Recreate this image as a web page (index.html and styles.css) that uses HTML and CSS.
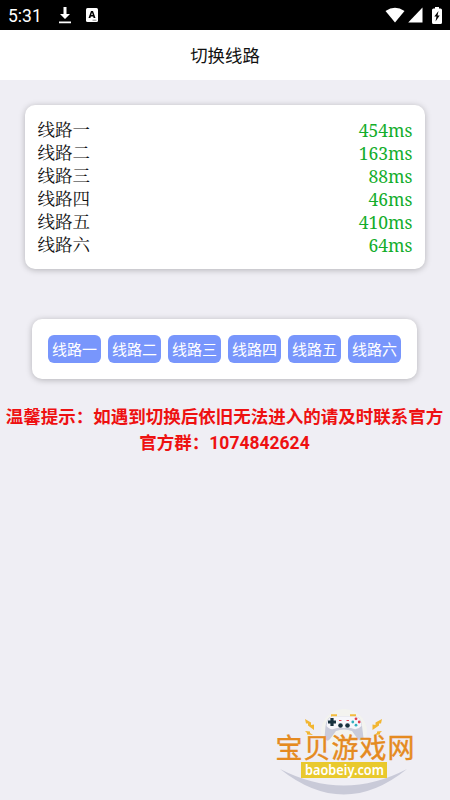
FILE: index.html
```html
<!DOCTYPE html>
<html lang="zh-CN">
<head>
    <meta charset="UTF-8">
    <meta name="viewport" content="width=device-width, initial-scale=1.0">
    <title>切换线路</title>
    <link rel="stylesheet" href="styles.css">
</head>
<body>
    <!-- Status Bar -->
    <div class="status-bar">
        <span class="time">5:31</span>
        <svg class="icon-download" width="14" height="17" viewBox="0 0 14 17">
            <path d="M5.5 0h3v7H12L7 12 2 7h3.5zM1 14.5h12v1.7H1z" fill="#fff"/>
        </svg>
        <svg class="icon-app" width="12" height="14" viewBox="0 0 12 14">
            <rect width="12" height="14" rx="1.5" fill="#fff"/>
            <path d="M2.5 10 5 3h2l2.5 7H7.6L7.2 8.5H4.8L4.4 10zM5.2 7h1.6L6 4.5z" fill="#000" fill-rule="evenodd"/>
            <path d="M6.5 12.2h4" stroke="#888" stroke-width="1"/>
        </svg>
        <div class="status-right">
            <svg width="20" height="16" viewBox="0 0 20 16">
                <path d="M.5 4Q10-2.500 19.500 4L10 15.500z" fill="#fff"/>
            </svg>
            <svg width="15" height="16" viewBox="0 0 15 16">
                <path d="M14.500.5v15H.2z" fill="#fff"/>
            </svg>
            <svg class="battery" width="10" height="17" viewBox="0 0 10 17">
                <path d="M3 0h4v1.5h1.500Q10 1.500 10 3v12.500Q10 17 8.500 17h-7Q0 17 0 15.500V3Q0 1.500 1.500 1.500H3z" fill="#fff"/>
                <path d="M6.500 4 2.300 9.500H4.500L3.500 14.500 7.700 8.500H5.500z" fill="#000"/>
            </svg>
        </div>
    </div>

    <div class="header">切换线路</div>

    <!-- Line Speeds -->
    <div class="card line-list">
        <div class="line"><span>线路一</span><span class="ms">454ms</span></div>
        <div class="line"><span>线路二</span><span class="ms">163ms</span></div>
        <div class="line"><span>线路三</span><span class="ms">88ms</span></div>
        <div class="line"><span>线路四</span><span class="ms">46ms</span></div>
        <div class="line"><span>线路五</span><span class="ms">410ms</span></div>
        <div class="line"><span>线路六</span><span class="ms">64ms</span></div>
    </div>

    <!-- Line Buttons -->
    <div class="card line-buttons">
        <button>线路一</button>
        <button>线路二</button>
        <button>线路三</button>
        <button>线路四</button>
        <button>线路五</button>
        <button>线路六</button>
    </div>

    <div class="tips">
        <p>温馨提示：如遇到切换后依旧无法进入的请及时联系官方</p>
        <p>官方群：1074842624</p>
    </div>

    <!-- Site Logo -->
    <svg class="logo" width="150" height="94" viewBox="270 706 150 94">
        <circle cx="344" cy="732" r="23" fill="#f3f3ef"/>
        <path d="M280 769Q344 802 407 769Q344 820 280 769z" fill="#c9cad8"/>
        <!-- gamepad -->
        <path d="M331 715.500h6M350 715.500h6" stroke="#f3bc3d" stroke-width="2.500"/>
        <path d="M332 716.500h24Q361 717 362 726L363.500 738Q361 743 357 738L352 731Q344 728 336 731L330 739Q327 743 324.500 738L325.500 726Q327 717 332 716.500z" fill="#c9cbda"/>
        <path d="M332 716.500h24Q361.500 718 361.500 726Q357 731 351 728H337Q330 731 326.500 726Q327 718 332 716.500z" fill="#f6f6fb"/>
        <path d="M332 718v8M328 722h8" stroke="#17313f" stroke-width="3.200"/>
        <g fill="#17313f">
            <circle cx="340.500" cy="725.500" r="2.300"/>
            <circle cx="347.500" cy="725.500" r="2.300"/>
        </g>
        <path d="M339 720.500h2.500M346.500 720.500h2.500" stroke="#e2485b" stroke-width="1.200"/>
        <g fill="#de3d50">
            <circle cx="356" cy="718.800" r="1.400"/>
            <circle cx="359.200" cy="722" r="1.400"/>
        </g>
        <g fill="#31aebd">
            <circle cx="352.800" cy="722" r="1.400"/>
            <circle cx="356" cy="725.200" r="1.400"/>
        </g>
        <!-- sparks -->
        <g fill="#f2b632">
            <path d="M305 719l6 3.500 0 2.500 3-.5 0 5.500-6-4.500 0-2-2 0z"/>
            <path d="M382 719l-6.500 3.500 0 2.500-3-.5 0 5.500 6.500-4.500 0-2 2 0z"/>
            <path d="M305 731l5 .5 0 1.500 3 2-6-.5 0-1.500z"/>
            <path d="M382 731l-5 .5 0 1.500-3 2 6-.5 0-1.500z"/>
        </g>
        <rect x="301" y="762" width="86" height="16" fill="#e9c92d"/>
        <text class="logo-name" x="275.500" y="758">宝贝游戏网</text>
        <text class="logo-url" x="305" y="774.500" textLength="79" lengthAdjust="spacingAndGlyphs">baobeiy.com</text>
    </svg>
</body>
</html>
```

FILE: styles.css
```css
* {
    margin: 0;
    padding: 0;
    box-sizing: border-box;
}
body {
    display: flex;
    flex-direction: column;
    align-items: center;
    height: 100vh;
    overflow: hidden;
    background: #efeef4;
    color: #111;
    font-family: Roboto, "Noto Sans CJK SC", sans-serif;
}

/* Status Bar */
.status-bar {
    display: flex;
    align-items: center;
    width: 100%;
    height: 30px;
    padding: 0 8px;
    background: #000;
    color: #fff;
    flex-shrink: 0;
}
.time {
    width: 50px;
    padding-top: 1px;
    font-size: 17.5px;
}
.icon-app {
    margin-left: 14px;
}
.status-right {
    display: flex;
    align-items: center;
    gap: 3px;
    margin-left: auto;
}
.battery {
    margin-left: 6px;
}

.header {
    width: 100%;
    height: 50px;
    background: #fff;
    text-align: center;
    font-size: 17.4px;
    line-height: 53px;
    flex-shrink: 0;
}

/* Cards */
.card {
    background: #fff;
    border-radius: 10px;
    box-shadow: 0 1px 6px rgba(0, 0, 0, 0.25);
}
.line-list {
    width: 400px;
    height: 164px;
    margin-top: 25px;
    padding: 12px 12.5px 0;
}
.line {
    display: flex;
    justify-content: space-between;
    height: 23.1px;
    font-family: "Noto Serif CJK SC", "Noto Sans CJK SC", serif;
    font-size: 17.5px;
    line-height: 23px;
}
.ms {
    padding-top: 2px;
    color: #13ad2b;
    font-family: "Noto Serif", "DejaVu Serif Condensed", "DejaVu Serif", serif;
    font-size: 17.5px;
}
.line-buttons {
    display: flex;
    justify-content: center;
    gap: 7px;
    width: 385px;
    height: 60px;
    margin-top: 50px;
    margin-right: 1px;
    padding-top: 16px;
}
.line-buttons button {
    width: 53px;
    height: 28px;
    border: none;
    border-radius: 6px;
    background: #7896fc;
    color: #fff;
    font-family: "Noto Sans CJK SC", sans-serif;
    font-size: 15px;
    line-height: 28px;
}

.tips {
    margin-top: 26px;
    margin-right: 1px;
    color: #ee1111;
    text-align: center;
    font-size: 17.5px;
    font-weight: bold;
    line-height: 25.6px;
    white-space: nowrap;
}

/* Site Logo */
.logo {
    margin-top: auto;
    margin-left: 240px;
}
.logo-name {
    fill: #e58a20;
    stroke: #e58a20;
    stroke-width: 0.4px;
    font-family: "Noto Sans CJK SC", sans-serif;
    font-size: 27px;
    letter-spacing: 1px;
}
.logo-url {
    fill: #fff;
    font-family: "Noto Sans", sans-serif;
    font-size: 14px;
    font-weight: 600;
}
```
